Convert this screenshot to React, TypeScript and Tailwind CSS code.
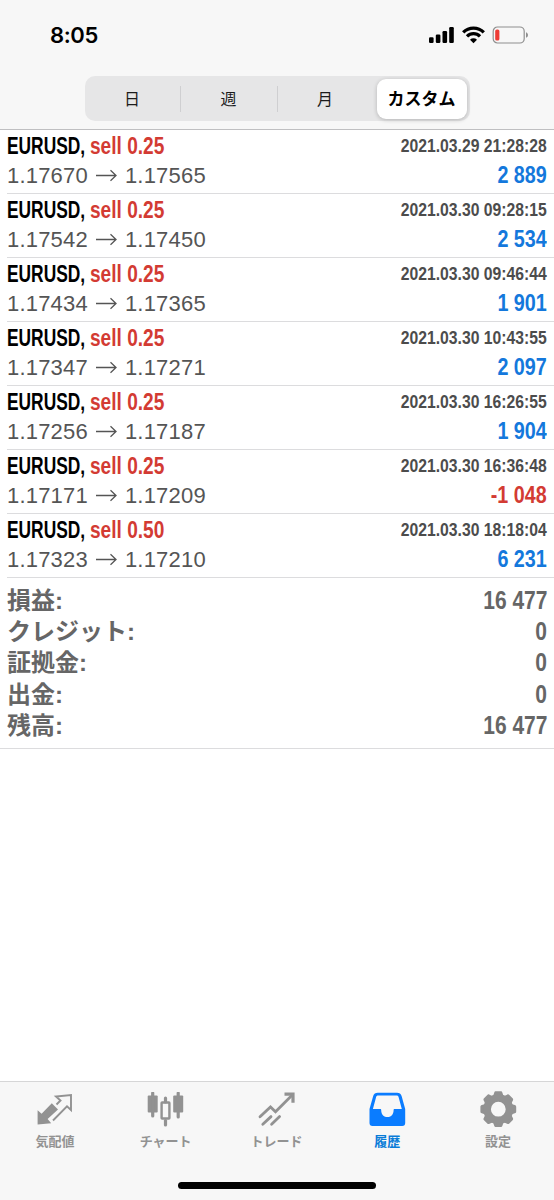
import type { ReactNode } from 'react';

type Deal = {
  volume: string;
  open: string;
  close: string;
  time: string;
  profit: string;
};

const deals: Deal[] = [
  { volume: '0.25', open: '1.17670', close: '1.17565', time: '2021.03.29 21:28:28', profit: '2 889' },
  { volume: '0.25', open: '1.17542', close: '1.17450', time: '2021.03.30 09:28:15', profit: '2 534' },
  { volume: '0.25', open: '1.17434', close: '1.17365', time: '2021.03.30 09:46:44', profit: '1 901' },
  { volume: '0.25', open: '1.17347', close: '1.17271', time: '2021.03.30 10:43:55', profit: '2 097' },
  { volume: '0.25', open: '1.17256', close: '1.17187', time: '2021.03.30 16:26:55', profit: '1 904' },
  { volume: '0.25', open: '1.17171', close: '1.17209', time: '2021.03.30 16:36:48', profit: '-1 048' },
  { volume: '0.50', open: '1.17323', close: '1.17210', time: '2021.03.30 18:18:04', profit: '6 231' },
];

const totals = [
  { label: '損益:', value: '16 477' },
  { label: 'クレジット:', value: '0' },
  { label: '証拠金:', value: '0' },
  { label: '出金:', value: '0' },
  { label: '残高:', value: '16 477' },
];

const bold = "font-['Liberation_Sans',sans-serif] font-bold whitespace-nowrap";
const japanese = "font-['Noto_Sans_CJK_JP',sans-serif]";

function StatusBar() {
  return (
    <div className="flex h-[76px] items-start justify-between pl-[50px] pr-[25px]">
      <span className="mt-[21px] font-['Inter',sans-serif] text-[22px] font-semibold leading-7 tracking-[-0.4px] text-black">
        8:05
      </span>
      <div className="mt-[26px] flex items-center">
        <svg width="25" height="18" viewBox="0 0 25 18">
          <rect x="0" y="11.3" width="4.6" height="5.7" rx="1.2" />
          <rect x="6.8" y="8.5" width="4.6" height="8.5" rx="1.2" />
          <rect x="13.5" y="5" width="4.6" height="12" rx="1.2" />
          <rect x="20.2" y="1" width="4.6" height="16" rx="1.2" />
        </svg>
        <svg className="ml-2" width="23" height="18" viewBox="0 0 23 18" fill="none" stroke="#000" strokeWidth="3.3">
          <path d="M1.2 6.3a14.6 14.6 0 0 1 20.6 0" />
          <path d="M5 10.4a9.2 9.2 0 0 1 13 0" />
          <path d="M11.5 17.2 8 13.7a5 5 0 0 1 7 0z" fill="#000" stroke="none" />
        </svg>
        <svg className="ml-[7px]" width="37" height="18" viewBox="0 0 37 18">
          <rect x="1.2" y="1" width="31" height="16" rx="4.3" fill="none" stroke="#8f8f8f" strokeWidth="1.2" />
          <rect x="3.2" y="3.5" width="4.2" height="11" rx="1.6" fill="#ee3b35" />
          <path d="M34 6.2c2.7 1.2 2.7 4.4 0 5.6z" fill="#8f8f8f" />
        </svg>
      </div>
    </div>
  );
}

function RangePicker() {
  return (
    <div className={`mx-auto flex h-[45px] w-[385px] items-center rounded-[10px] bg-[#e6e6e7] text-[16px] text-[#1c1c1c] ${japanese}`}>
      <span className="w-[95px] pb-[2px] text-center">日</span>
      <span className="h-[26px] w-px bg-[#cfcfd1]" />
      <span className="w-[96px] pb-[2px] text-center">週</span>
      <span className="h-[26px] w-px bg-[#cfcfd1]" />
      <span className="w-[99px] pb-[2px] pr-1 text-center">月</span>
      <span className="flex h-10 w-[90px] items-center justify-center rounded-[9px] bg-white pb-[2px] text-[17px] font-bold text-black shadow-[0_1px_4px_rgba(0,0,0,0.22)]">
        カスタム
      </span>
    </div>
  );
}

function DealRow({ deal }: { deal: Deal }) {
  const loss = deal.profit.startsWith('-');

  return (
    <li className="ml-[7px] h-16 border-b border-[#dcdcde] pr-[7px]">
      <div className={`flex h-[31px] items-center justify-between ${bold}`}>
        <span className="flex pt-[2px] text-[23px]">
          <span className="w-[83px] origin-left scale-x-[0.755] text-black">EURUSD,</span>
          <span className="origin-left scale-x-[0.83] text-[#d33b33]">sell {deal.volume}</span>
        </span>
        <span className="origin-right scale-x-[0.85] text-[18.5px] text-[#4c4c4c]">{deal.time}</span>
      </div>
      <div className="flex h-[29px] items-center justify-between">
        <span className="flex items-center font-['Liberation_Sans',sans-serif] text-[22px] tracking-[0.2px] text-[#555]">
          {deal.open}
          <svg className="mx-2" width="21" height="14" viewBox="0 0 21 14" fill="none" stroke="#555" strokeWidth="1.3">
            <path d="M0 6.5h20M14.5 1.3 20 6.500l-5.5 5.200" />
          </svg>
          {deal.close}
        </span>
        <span className={`origin-right scale-x-[0.84] pt-px text-[23.5px] ${bold} ${loss ? 'text-[#d33b33]' : 'text-[#1478dc]'}`}>
          {deal.profit}
        </span>
      </div>
    </li>
  );
}

function Summary() {
  return (
    <div className="flex h-[171px] flex-col border-b border-[#dcdcde] px-[7px] pt-[7px] text-[#666]">
      {totals.map((row) => (
        <div key={row.label} className="flex h-[31.2px] items-center justify-between">
          <span className="pt-px font-['Liberation_Sans','Noto_Sans_CJK_JP',sans-serif] text-[24px] font-bold leading-none">
            {row.label}
          </span>
          <span className={`origin-right scale-x-[0.84] text-[25px] leading-none ${bold}`}>{row.value}</span>
        </div>
      ))}
    </div>
  );
}

function QuotesIcon() {
  return (
    <svg width="38" height="38" viewBox="0 0 38 38">
      <path d="M1.600 32.500V18.200l4 3.600L15.800 11.300l6.200 6.200L11.600 27l3.600 4.200z" fill="#929292" />
      <path
        d="M20.500 12.500 24.500 8.500 20 4.500 35 3v15l-4-3.600L17 28.500"
        fill="none"
        stroke="#929292"
        strokeWidth="1.9"
      />
    </svg>
  );
}

function ChartIcon() {
  return (
    <svg width="38" height="38" viewBox="0 0 38 38" fill="#929292">
      <rect x="0.7" y="3.5" width="10" height="17" rx="1" />
      <rect x="4.1" y="-0.5" width="3.2" height="26" rx="1.6" />
      <rect x="26.2" y="3.5" width="10" height="17" rx="1" />
      <rect x="29.6" y="-0.5" width="3.2" height="27" rx="1.6" />
      <rect x="16.9" y="4.5" width="3.2" height="7" rx="1.6" />
      <rect x="16.9" y="27" width="3.2" height="7.5" rx="1.6" />
      <rect x="14.6" y="10.5" width="7.8" height="16" rx="0.5" fill="none" stroke="#929292" strokeWidth="2.4" />
    </svg>
  );
}

function TradeIcon() {
  return (
    <svg width="38" height="38" viewBox="0 0 38 38" fill="none" stroke="#929292" strokeWidth="2.8" strokeLinecap="round">
      <path d="M2 24.8 12.5 15l5 4.7L34 3.3" />
      <path d="M26.5 2.2H35v8.500" strokeWidth="3.2" strokeLinecap="butt" />
      <path d="M4.8 32.2 13 24.600M13.600 32.200l8-7.600" />
    </svg>
  );
}

function HistoryIcon() {
  return (
    <svg width="38" height="38" viewBox="0 0 38 38">
      <path
        fill="#0a7cff"
        fillRule="evenodd"
        d="M8.800 0.800h19.200c2.500 0 3.800 1 4.600 3.200L36.200 17v14c0 2-1 3-3 3H3.500c-2 0-3-1-3-3V17L4.200 4C5 1.800 6.300 0.800 8.800 0.800zM9.300 3.600c-1.300 0-2 .6-2.300 1.800L3.900 17H11.200c.8 0 1 .4 1 1.200 0 9.200 12.400 9.200 12.400 0 0-.8.2-1.200 1-1.200h7.200L29.700 5.400c-.3-1.200-1-1.800-2.300-1.800z"
      />
    </svg>
  );
}

function SettingsIcon() {
  const teeth = [0, 45, 90, 135, 180, 225, 270, 315];

  return (
    <svg className="overflow-visible" width="38" height="38" viewBox="0 0 38 38" fill="#929292">
      {teeth.map((angle) => (
        <path
          key={angle}
          transform={`translate(18.3 17.2) rotate(${angle})`}
          d="M-2.300-17.900h4.600c1 0 1.500.5 1.800 1.400l1.200 3.500h-10.600l1.200-3.500c.3-.9.800-1.400 1.800-1.400z"
        />
      ))}
      <circle cx="18.3" cy="17.2" r="11.2" fill="none" stroke="#929292" strokeWidth="7.6" />
    </svg>
  );
}

function Tab({ icon, label, active = false }: { icon: ReactNode; label: string; active?: boolean }) {
  return (
    <div className={`flex flex-1 flex-col items-center pt-[10px] ${active ? 'text-[#0a7cd8]' : 'text-[#929292]'}`}>
      {icon}
      <span className={`mt-px pr-px text-[13px] font-bold leading-5 ${japanese}`}>{label}</span>
    </div>
  );
}

export default function App() {
  return (
    <div className="flex h-[1200px] w-[554px] flex-col overflow-hidden bg-white">
      <header className="h-[130px] shrink-0 border-b border-[#bfbfc1] bg-[#f7f7f7]">
        <StatusBar />
        <RangePicker />
      </header>
      <main className="flex-1">
        <ul>
          {deals.map((deal) => (
            <DealRow key={deal.time} deal={deal} />
          ))}
        </ul>
        <Summary />
      </main>
      <footer className="flex h-[119px] shrink-0 flex-col border-t border-[#d6d6d7] bg-[#f7f7f7]">
        <nav className="flex h-[100px]">
          <Tab icon={<QuotesIcon />} label="気配値" />
          <Tab icon={<ChartIcon />} label="チャート" />
          <Tab icon={<TradeIcon />} label="トレード" />
          <Tab icon={<HistoryIcon />} label="履歴" active />
          <Tab icon={<SettingsIcon />} label="設定" />
        </nav>
        <div className="mx-auto h-[7px] w-[198px] rounded-full bg-black" />
      </footer>
    </div>
  );
}
